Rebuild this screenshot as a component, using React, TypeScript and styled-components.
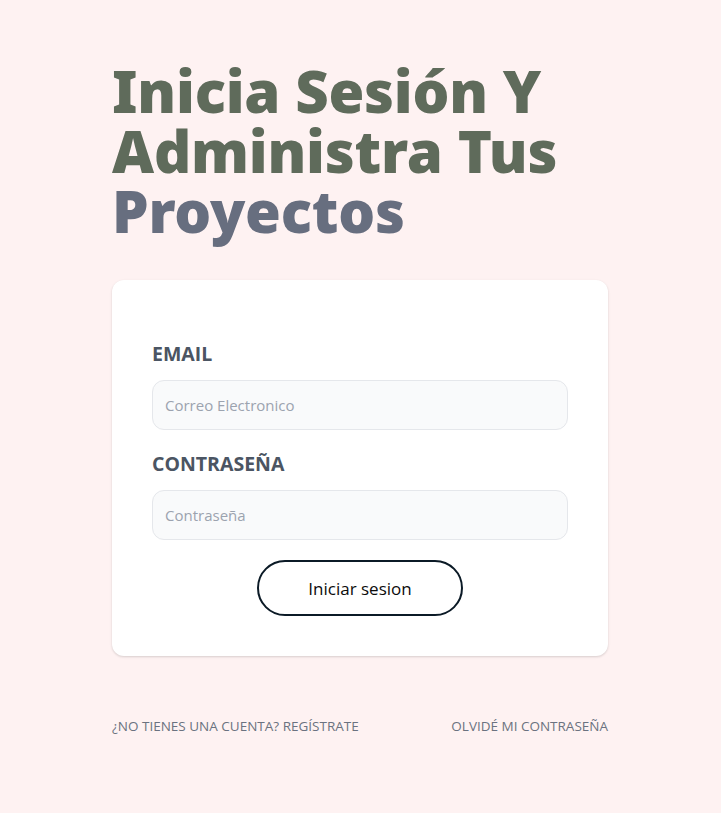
import React from "react";
import styled, { createGlobalStyle } from "styled-components";

const GlobalStyle = createGlobalStyle`
  html, body {
    margin: 0;
    padding: 0;
    background: #fef2f2;
    font-family: "Open Sans", "Noto Sans", sans-serif;
  }
  * { box-sizing: border-box; }
`;

const Page = styled.main`
  min-height: 813px;
  background: #fef2f2;
  display: flex;
  justify-content: center;
  padding: 61px 1px 0 0;
`;

const Column = styled.div`
  width: 496px;
  display: flex;
  flex-direction: column;
`;

const Title = styled.h1`
  margin: 0;
  font-family: "Noto Sans", "Open Sans", sans-serif;
  font-weight: 900;
  font-size: 58px;
  line-height: 60px;
  color: #5f6b5b;
  letter-spacing: -0.2px;
`;

const Accent = styled.span`
  color: #676e7f;
`;

const Card = styled.form`
  margin-top: 39px;
  background: #ffffff;
  border-radius: 12px;
  box-shadow: 0 1px 3px rgba(0, 0, 0, 0.1), 0 1px 2px rgba(0, 0, 0, 0.06);
  padding: 60px 40px 40px;
  display: flex;
  flex-direction: column;
`;

const Field = styled.div<{ $first?: boolean }>`
  display: flex;
  flex-direction: column;
  margin-top: ${(p) => (p.$first ? "0" : "20px")};
`;

const Label = styled.label`
  font-family: "Open Sans", "Noto Sans", sans-serif;
  font-size: 19.5px;
  line-height: 28px;
  font-weight: 700;
  text-transform: uppercase;
  color: #4b5563;
`;

const Input = styled.input`
  margin-top: 12px;
  height: 50px;
  width: 100%;
  padding: 0 12px;
  border: 1px solid #e5e7eb;
  border-radius: 12px;
  background: #f9fafb;
  font-family: "Open Sans", "Noto Sans", sans-serif;
  font-size: 15px;
  color: #374151;
  outline: none;
  &::placeholder {
    color: #9ca3af;
  }
`;

const Button = styled.button`
  margin: 20px auto 0;
  width: 206px;
  height: 56px;
  border: 2px solid #0b1a26;
  border-radius: 9999px;
  background: #ffffff;
  font-family: "Open Sans", "Noto Sans", sans-serif;
  font-size: 17px;
  font-weight: 500;
  color: #0b0b0b;
  cursor: pointer;
`;

const Links = styled.nav`
  margin-top: 60px;
  display: flex;
  justify-content: space-between;
  align-items: center;
`;

const FooterLink = styled.a`
  font-family: "Open Sans", "Noto Sans", sans-serif;
  font-size: 13.5px;
  line-height: 20px;
  text-transform: uppercase;
  color: #6b7280;
  text-decoration: none;
`;

export default function App() {
  return (
    <>
      <GlobalStyle />
      <Page>
        <Column>
          <Title>
            Inicia Sesión Y Administra Tus <Accent>Proyectos</Accent>
          </Title>
          <Card onSubmit={(e) => e.preventDefault()}>
            <Field $first>
              <Label htmlFor="email">Email</Label>
              <Input id="email" type="email" placeholder="Correo Electronico" />
            </Field>
            <Field>
              <Label htmlFor="password">Contraseña</Label>
              <Input id="password" type="password" placeholder="Contraseña" />
            </Field>
            <Button type="submit">Iniciar sesion</Button>
          </Card>
          <Links>
            <FooterLink href="#">¿No tienes una cuenta? Regístrate</FooterLink>
            <FooterLink href="#">Olvidé mi contraseña</FooterLink>
          </Links>
        </Column>
      </Page>
    </>
  );
}
